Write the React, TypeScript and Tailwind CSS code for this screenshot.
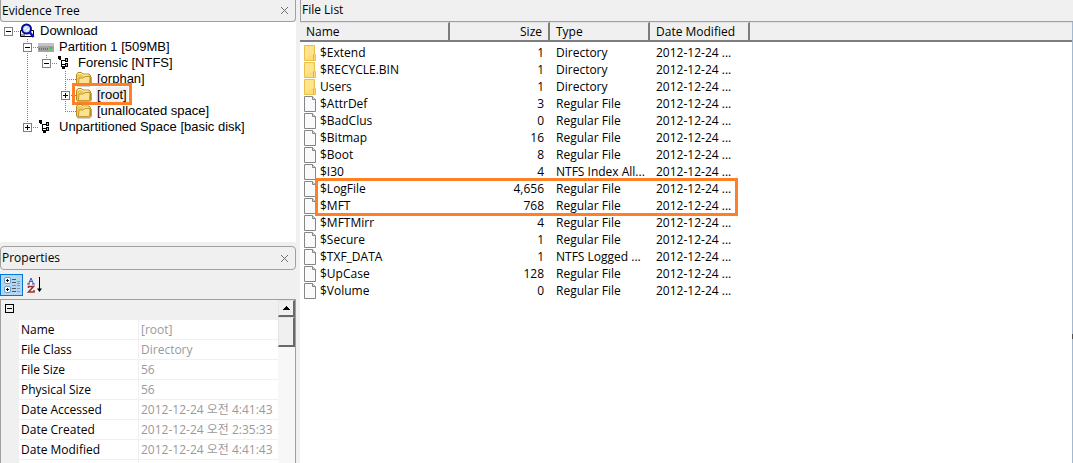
import React from "react";
import { clsx } from "clsx";


type Line = "none" | "through" | "tee" | "end" | "minus" | "minusFirst" | "minusEnd" | "plus" | "plusEnd";

interface TreeNode {
    id: number;
    label: string;
    cells: Line[];
    icon: React.ReactNode;
    marked?: boolean;
}

interface FileRow {
    name: string;
    size: string;
    type: string;
    folder?: boolean;
}


const EvidenceIcon: React.FC = () => (
    <svg width="16" height="16" viewBox="0 0 16 16" aria-hidden="true">
        <path d="M1.500 7.500h13v6h-13z" fill="#fff" stroke="#000" />
        <path d="M2 11h4v2H2z" fill="#9a9a9a" />
        <circle cx="7.500" cy="6" r="4.500" fill="#a9d8ff" stroke="#0a0a96" strokeWidth="2" />
        <path d="M10.500 9l4 5" stroke="#1010c8" strokeWidth="2.500" />
        <path d="M5 6.500L8 3.500M7 8.500l3-3" stroke="#fff" strokeWidth="1.500" />
    </svg>
);

const DriveIcon: React.FC = () => (
    <svg width="16" height="16" viewBox="0 0 16 16" shapeRendering="crispEdges" aria-hidden="true">
        <path d="M0 4h16v9H0z" fill="#a3a3a3" />
        <path d="M0 4h16v3H0z" fill="#c4c4c4" />
        <path d="M1.500 9v2M3.500 9v2M5.500 9v2M7.500 9v2M9.500 9v2" stroke="#707070" />
        <path d="M12 8h2v2h-2z" fill="#00ee00" />
    </svg>
);

const VolumeIcon: React.FC = () => (
    <svg width="16" height="16" viewBox="0 0 16 16" shapeRendering="crispEdges" aria-hidden="true">
        <path d="M1 1h3v3H1zM5 11h3v3H5z" fill="#000" />
        <path d="M2 3h2v2h4v1H5v3h4v1H5v2H4V5H2z" fill="#000" />
        <path d="M8 3h3v4H8zM8 8h3v4H8z" fill="#000" />
        <path d="M9 4h1v2H9zM9 9h1v2H9z" fill="#b8b8b8" />
    </svg>
);

const TreeFolderIcon: React.FC = () => (
    <svg width="16" height="16" viewBox="0 0 16 16" aria-hidden="true">
        <path d="M1 15h13l1.500-1.500V6" fill="none" stroke="#a9a9a9" />
        <path d="M.500 12V3.500l1.500-2h3.500l1.500 1.500H13l1.500 1.500V13l-1 1H1.500l-1-1z" fill="#eec95c" stroke="#b98a1e" />
        <path d="M2.500 13l.5-6h4.500l1.500-1.500h5l-.5 8H2z" fill="#fbe394" stroke="#c99a2c" />
        <path d="M2 3.500l.5-1h3L7 4h5.500" fill="none" stroke="#fff3b8" />
    </svg>
);

const FolderIcon: React.FC = () => (
    <svg width="12" height="16" viewBox="0 0 12 16" aria-hidden="true">
        <path d="M.5.5h10v9h1v6H.5z" fill="#fddc7c" stroke="#e9c148" />
        <path d="M9.500 9.500v6" stroke="#e2b437" />
        <path d="M1 1h8v8L1 13z" fill="#ffe490" />
    </svg>
);

const FileIcon: React.FC = () => (
    <svg width="12" height="16" viewBox="0 0 12 16" aria-hidden="true">
        <path d="M.5.5h8l3 3v12H.5z" fill="#f8fafb" stroke="#868686" />
        <path d="M8.500.5v3h3" fill="#dcdcdc" stroke="#868686" />
    </svg>
);

const CategorizedIcon: React.FC = () => (
    <svg width="16" height="16" viewBox="0 0 16 16" aria-hidden="true">
        <rect x=".5" y=".5" width="6" height="6" rx="1.500" fill="#fff" stroke="#6f9fc4" />
        <rect x=".5" y="9.500" width="6" height="6" rx="1.500" fill="#fff" stroke="#6f9fc4" />
        <path d="M2 3.500h3M3.500 2v3M2 12.500h3M3.500 11v3" stroke="#000" />
        <path d="M8 2.500h4M8 5.500h4M8 11.500h4M8 14.500h4" stroke="#4a5560" />
        <path d="M13 4.500h3M13 6.500h3M13 8.500h3M8 8.500h4M13 11.500h3M13 14.500h3" stroke="#8397a8" />
    </svg>
);

const SortIcon: React.FC = () => (
    <svg width="16" height="16" viewBox="0 0 16 16" aria-hidden="true">
        <path d="M1.500 7L4 1l2.500 6M2.500 4.500h3.500M0 7h3M5 7h3" fill="none" stroke="#3b55b8" />
        <path d="M1.500 11V9.500h5L1.500 15h5.500v-2" fill="none" stroke="#9c2f2f" strokeWidth="1.500" />
        <path d="M12.500 0v13" stroke="#000" />
        <path d="M10 11.500h5L12.500 15z" fill="#000" />
    </svg>
);

// one 19px column of the tree: dotted connectors and the +/- box
const TreeCell: React.FC<{ line: Line }> = ({ line }) => {
    const boxed = line.startsWith("minus") || line.startsWith("plus");
    const up = line !== "none" && line !== "minusFirst";
    const down = line === "through" || line === "tee" || line === "minus" || line === "plus";
    const right = line !== "none" && line !== "through";

    return (
        <svg width="19" height="16" viewBox="0 0 19 16" shapeRendering="crispEdges" className="shrink-0" aria-hidden="true">
            {up && <path d="M8.500 0v8" stroke="#808080" strokeDasharray="1 1" />}
            {down && <path d="M8.500 8v8" stroke="#808080" strokeDasharray="1 1" />}
            {right && <path d="M8 8.500h11" stroke="#808080" strokeDasharray="1 1" />}
            {boxed && <path d="M4.500 4.500h8v8h-8z" fill="#fff" stroke="#808080" />}
            {boxed && <path d="M6 8.500h5" stroke="#000" />}
            {line.startsWith("plus") && <path d="M8.500 6v5" stroke="#000" />}
        </svg>
    );
};

const PanelTitle: React.FC<{ title: string; className?: string }> = ({ title, className }) => (
    <div className={clsx("flex shrink-0 items-center justify-between border-[#a0a0a0] pl-px pr-1", className)}>
        <h2 className="text-[12px] leading-4">{title}</h2>
        <button type="button" aria-label={"Close " + title} className="p-0.5">
            <svg width="9" height="9" viewBox="0 0 9 9" aria-hidden="true">
                <path d="M1 1l7 7M8 1l-7 7" stroke="#6e6e6e" />
            </svg>
        </button>
    </div>
);


const App: React.FC = () => {

    const nodes: TreeNode[] = [
        { id: 1, label: "Download", cells: ["minusFirst"], icon: <EvidenceIcon /> },
        { id: 2, label: "Partition 1 [509MB]", cells: ["none", "minus"], icon: <DriveIcon /> },
        { id: 3, label: "Forensic [NTFS]", cells: ["none", "through", "minusEnd"], icon: <VolumeIcon /> },
        { id: 4, label: "[orphan]", cells: ["none", "through", "none", "tee"], icon: <TreeFolderIcon /> },
        { id: 5, label: "[root]", cells: ["none", "through", "none", "plus"], icon: <TreeFolderIcon />, marked: true },
        { id: 6, label: "[unallocated space]", cells: ["none", "through", "none", "end"], icon: <TreeFolderIcon /> },
        { id: 7, label: "Unpartitioned Space [basic disk]", cells: ["none", "plusEnd"], icon: <VolumeIcon /> },
    ];

    const properties = [
        { label: "Name", value: "[root]" },
        { label: "File Class", value: "Directory" },
        { label: "File Size", value: "56" },
        { label: "Physical Size", value: "56" },
        { label: "Date Accessed", value: "2012-12-24 오전 4:41:43" },
        { label: "Date Created", value: "2012-12-24 오전 2:35:33" },
        { label: "Date Modified", value: "2012-12-24 오전 4:41:43" },
    ];

    const files: FileRow[] = [
        { name: "$Extend", size: "1", type: "Directory", folder: true },
        { name: "$RECYCLE.BIN", size: "1", type: "Directory", folder: true },
        { name: "Users", size: "1", type: "Directory", folder: true },
        { name: "$AttrDef", size: "3", type: "Regular File" },
        { name: "$BadClus", size: "0", type: "Regular File" },
        { name: "$Bitmap", size: "16", type: "Regular File" },
        { name: "$Boot", size: "8", type: "Regular File" },
        { name: "$I30", size: "4", type: "NTFS Index All..." },
        { name: "$LogFile", size: "4,656", type: "Regular File" },
        { name: "$MFT", size: "768", type: "Regular File" },
        { name: "$MFTMirr", size: "4", type: "Regular File" },
        { name: "$Secure", size: "1", type: "Regular File" },
        { name: "$TXF_DATA", size: "1", type: "NTFS Logged ..." },
        { name: "$UpCase", size: "128", type: "Regular File" },
        { name: "$Volume", size: "0", type: "Regular File" },
    ];

    const headCell = "h-5 border-r-2 border-b-2 border-t border-t-[#e3e3e3] border-r-[#7d7d7d] border-b-[#7d7d7d] bg-[#f0f0f0] px-1.5 font-normal leading-4";


    return (
        <div className="flex h-screen overflow-hidden bg-[#f0f0f0] font-['Open_Sans','Noto_Sans_CJK_KR',sans-serif] text-[12px] text-black">

            <aside className="mr-1 flex w-[296px] shrink-0 flex-col">
                <PanelTitle title="Evidence Tree" className="h-[22px] rounded-b-sm border-x border-b" />

                <ul className="h-[220px] shrink-0 bg-white pt-px font-['Liberation_Sans',sans-serif] text-[13px] leading-4">
                    {nodes.map(({ id, label, cells, icon, marked }) => (
                        <li key={id} className="flex h-4">
                            {cells.map((line, i) => (
                                <TreeCell key={i} line={line} />
                            ))}
                            <div className="relative flex">
                                {icon}
                                <span className={clsx("ml-1 px-px", marked && "bg-[#f0f0f0]")}>{label}</span>
                                {marked && <div className="absolute -inset-x-1 -top-1 -bottom-0.5 border-3 border-[#ff7f27]" />}
                            </div>
                        </li>
                    ))}
                </ul>

                <PanelTitle title="Properties" className="mt-1 h-6 rounded-sm border" />

                <div className="flex h-[29px] shrink-0 items-start pt-1">
                    <button type="button" aria-label="Categorized" className="flex h-[22px] w-[23px] items-center justify-center border border-[#0078d7] bg-[#b3d7f3]">
                        <CategorizedIcon />
                    </button>
                    <button type="button" aria-label="Alphabetical" className="flex h-[22px] w-[23px] items-center justify-center">
                        <SortIcon />
                    </button>
                </div>

                <div className="flex min-h-0 flex-1 overflow-hidden border-x border-t border-[#a0a0a0]">
                    <div className="min-w-0 flex-1">
                        <div className="flex h-5 items-center pl-1">
                            <button type="button" aria-label="Collapse category" className="-mt-1">
                                <svg width="9" height="9" viewBox="0 0 9 9" shapeRendering="crispEdges" aria-hidden="true">
                                    <path d="M.5.5h8v8h-8zM2 4.500h5" fill="none" stroke="#000" />
                                </svg>
                            </button>
                        </div>
                        <div className="pl-[18px]">
                            <table className="w-full table-fixed border-separate border-spacing-0">
                                <tbody>
                                    {properties.map(({ label, value }) => (
                                        <tr key={label}>
                                            <th scope="row" className="h-5 w-[120px] border-r border-b border-[#f0f0f0] bg-white pl-0.5 text-left font-normal leading-4">{label}</th>
                                            <td className="h-5 overflow-hidden border-b border-[#f0f0f0] bg-white pl-0.5 leading-4 whitespace-nowrap text-[#9a9a9a]">{value}</td>
                                        </tr>
                                    ))}
                                    <tr>
                                        <td className="h-5 border-r border-[#f0f0f0] bg-white" />
                                        <td className="h-5 bg-white" />
                                    </tr>
                                </tbody>
                            </table>
                        </div>
                    </div>
                    <div className="flex w-[17px] shrink-0 flex-col bg-[#f7f7f7]">
                        <button type="button" aria-label="Scroll up" className="flex h-[17px] items-center justify-center border border-r-2 border-b-2 border-[#e3e3e3] border-r-[#696969] border-b-[#696969] bg-[#f0f0f0]">
                            <svg width="7" height="4" viewBox="0 0 7 4" shapeRendering="crispEdges" aria-hidden="true">
                                <path d="M3 0h1v1h1v1h1v1h1v1H0V3h1V2h1V1h1z" fill="#000" />
                            </svg>
                        </button>
                        <div className="h-[30px] border border-r-2 border-b-2 border-[#e3e3e3] border-r-[#696969] border-b-[#696969] bg-[#f0f0f0]" />
                    </div>
                </div>
            </aside>

            <main className="flex min-w-0 flex-1 flex-col">
                <div className="h-[22px] shrink-0 border-b border-l border-[#a0a0a0] pl-px">
                    <h2 className="leading-5">File List</h2>
                </div>

                <div className="relative flex-1 border-r border-[#a3b8d1] bg-white">
                    <table className="w-full table-fixed border-separate border-spacing-0">
                        <colgroup>
                            <col className="w-[150px]" />
                            <col className="w-[100px]" />
                            <col className="w-[100px]" />
                            <col className="w-[100px]" />
                            <col />
                        </colgroup>
                        <thead>
                            <tr>
                                <th className={clsx(headCell, "text-left")}>Name</th>
                                <th className={clsx(headCell, "text-right")}>Size</th>
                                <th className={clsx(headCell, "text-left")}>Type</th>
                                <th className={clsx(headCell, "text-left")}>Date Modified</th>
                                <td className="border-t border-b-2 border-t-[#e3e3e3] border-b-[#7d7d7d] bg-[#f0f0f0]" />
                            </tr>
                        </thead>
                        <tbody className="before:block before:h-0.5">
                            {files.map(({ name, size, type, folder }) => (
                                <tr key={name} className="whitespace-nowrap leading-4">
                                    <td className="h-[17px] pl-1">
                                        <div className="flex items-center gap-1">
                                            {folder ? <FolderIcon /> : <FileIcon />}
                                            {name}
                                        </div>
                                    </td>
                                    <td className="pr-1.5 text-right">{size}</td>
                                    <td className="pl-1.5">{type}</td>
                                    <td className="pl-1.5">2012-12-24 ...</td>
                                    <td />
                                </tr>
                            ))}
                        </tbody>
                    </table>
                    <div className="pointer-events-none absolute top-[156px] left-[15px] h-[38px] w-[423px] border-3 border-[#ff7f27]" />
                    {/* splitter grip on the window edge */}
                    <div className="absolute top-[312px] -right-px h-[5px] w-px bg-[#505050]" />
                </div>
            </main>

        </div>
    );
};

export default App;
